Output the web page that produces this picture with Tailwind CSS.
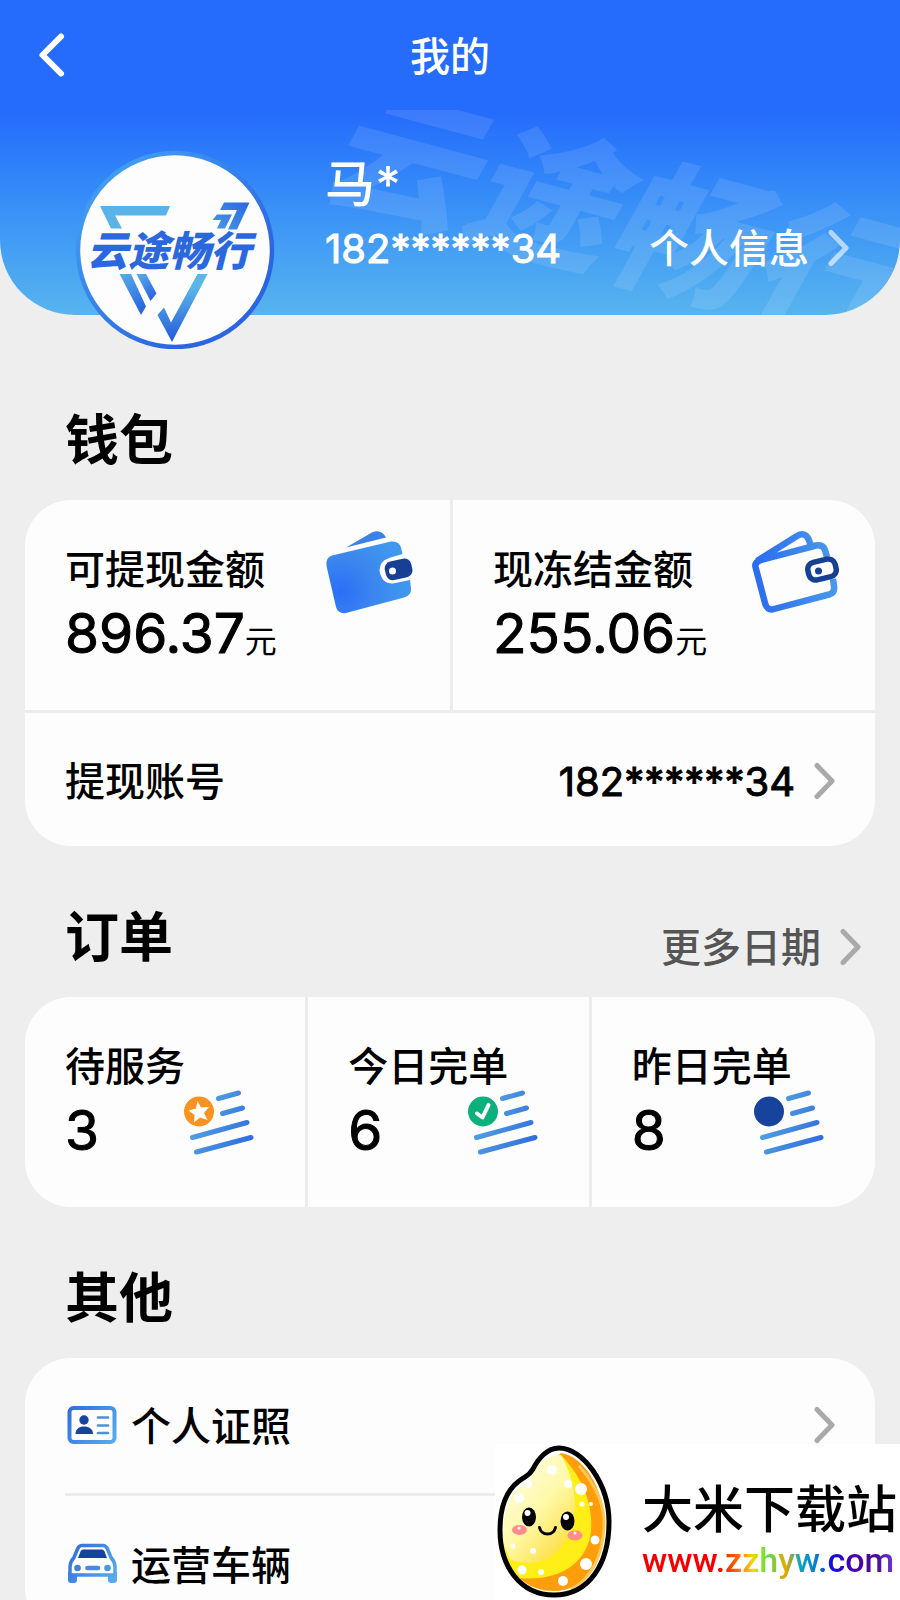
<!DOCTYPE html>
<html lang="zh-CN">
<head>
  <meta charset="UTF-8" />
  <meta name="viewport" content="width=device-width, initial-scale=1.0" />
  <title>我的</title>
  <script src="https://cdn.jsdelivr.net/npm/@tailwindcss/browser@4"></script>
</head>
<body class="h-screen overflow-hidden bg-[#eeeeee] font-['Inter','Noto_Sans_CJK_SC',sans-serif] font-medium text-black">

  <!-- Shared symbols and gradients -->
  <svg class="absolute size-0" aria-hidden="true">
    <defs>
      <linearGradient id="line" gradientUnits="userSpaceOnUse" x1="8" y1="20" x2="68" y2="52">
        <stop offset="0" stop-color="#58a9e0" />
        <stop offset="1" stop-color="#2f6de0" />
      </linearGradient>
      <linearGradient id="icon" gradientUnits="userSpaceOnUse" x1="3" y1="3" x2="52" y2="42">
        <stop offset="0" stop-color="#2f6be0" />
        <stop offset="1" stop-color="#5ab2ec" />
      </linearGradient>
      <symbol id="chevron" viewBox="0 0 24 40">
        <path d="M6 3.5 21 19 6 34.5" fill="none" stroke="currentColor" stroke-width="5" stroke-linecap="round" stroke-linejoin="round" />
      </symbol>
      <symbol id="list" viewBox="0 0 71 67">
        <path d="M35.5 9.5 55.5 4M39.5 24.5 59.5 19M9.5 48.5 64 33.5M13.5 63 68 48.5" fill="none" stroke="url(#line)" stroke-width="5" stroke-linecap="round" />
      </symbol>
    </defs>
  </svg>

  <!-- Header -->
  <header class="relative rounded-b-[75px] bg-linear-to-b from-[#266cfc] from-36% to-[#58b4ee] text-white">
    <div class="absolute inset-x-0 top-[110px] bottom-0 overflow-hidden rounded-b-[75px]" aria-hidden="true">
      <div class="absolute -top-11 left-[329px] origin-left rotate-15 text-[146px] leading-[150px] font-black whitespace-nowrap text-white/10 italic">云途畅行</div>
    </div>

    <nav class="relative grid h-[110px] grid-cols-[1fr_auto_1fr] items-center pl-9">
      <button type="button" aria-label="返回" class="w-8">
        <svg class="h-12 w-8" viewBox="0 0 32 48" fill="none" stroke="currentColor" stroke-width="6" stroke-linecap="round" stroke-linejoin="round">
          <path d="M25 5.500 6.500 24 25 42.500" />
        </svg>
      </button>
      <h1 class="pt-1 pr-9 text-[40px] leading-[56px]">我的</h1>
    </nav>

    <div class="relative flex pr-[51px] pl-[75px]">
      <svg class="mt-[39px] -mb-[34px] size-[200px] shrink-0" viewBox="0 0 200 200" role="img" aria-label="头像">
        <defs>
          <linearGradient id="ring" x1="0" y1="0" x2="1" y2="1">
            <stop offset="0.15" stop-color="#409cf0" />
            <stop offset="0.75" stop-color="#2b66e2" />
          </linearGradient>
          <linearGradient id="strip" x1="0" y1="0" x2="0.6" y2="1">
            <stop offset="0" stop-color="#58b0e8" />
            <stop offset="1" stop-color="#2b66e2" />
          </linearGradient>
          <linearGradient id="arrow" x1="0" y1="1" x2="1" y2="0">
            <stop offset="0" stop-color="#4a9ae8" />
            <stop offset="1" stop-color="#2b66e2" />
          </linearGradient>
          <linearGradient id="tick" x1="0" y1="0" x2="0" y2="1">
            <stop offset="0.2" stop-color="#5ab5e9" />
            <stop offset="1" stop-color="#2459dc" />
          </linearGradient>
        </defs>
        <circle cx="100" cy="101" r="97" fill="#fdfdfd" stroke="url(#ring)" stroke-width="4.500" />
        <path d="M25 57H95L91 66.500H40L47 79.500H36Z" fill="#59b3e8" />
        <path d="M149 53.500H174.500L162 80.500H153L162 61H145ZM142 65.500H157L150 79.500H142L146 71H137.500Z" fill="url(#arrow)" />
        <path d="M44.500 125H56L71 157.500 66 166Z" fill="url(#strip)" />
        <path d="M61.500 125H71L81.500 144.500 75.500 152Z" fill="url(#strip)" />
        <path d="M122.500 125H132.500L97 193 82.500 166 89 158.500 96 173.500Z" fill="url(#tick)" />
        <text x="12" y="117" font-size="41" font-weight="900" font-style="italic" fill="#2c68dd">云途畅行</text>
      </svg>

      <div class="mt-[46px] ml-[50px] flex-1">
        <p class="text-[50px] leading-[56px]">马*</p>
        <div class="mt-2 flex items-center justify-between pt-px text-[40px] leading-[56px]">
          <span class="font-normal [-webkit-text-stroke:1px]">182******34</span>
          <a href="#" class="flex items-center gap-4">个人信息
            <svg class="h-10 w-6 text-white/60"><use href="#chevron" /></svg>
          </a>
        </div>
      </div>
    </div>
  </header>

  <main class="px-[25px] pt-[34px]">
    <!-- Wallet -->
    <section>
      <h2 class="mt-[54px] mb-[21px] pl-10 text-[54px] leading-[76px] font-semibold">钱包</h2>
      <div class="overflow-hidden rounded-[46px] bg-[#fdfdfd]">
        <div class="grid grid-cols-2 border-b-3 border-[#ececec]">
          <div class="flex justify-between pt-[42px] pr-[37px] pb-10 pl-10">
            <div>
              <p class="text-[40px] leading-[56px]">可提现金额</p>
              <p class="text-[55px] leading-[70px] font-normal [-webkit-text-stroke:1px]">896.37<span class="text-[32px] leading-none [-webkit-text-stroke:0]">元</span></p>
            </div>
            <svg class="-mt-[12px] h-[84px] w-[88px] shrink-0" viewBox="0 0 88 84" aria-hidden="true">
              <defs>
                <radialGradient id="wallet" gradientUnits="userSpaceOnUse" cx="16" cy="62" r="66">
                  <stop offset="0" stop-color="#2b6ef8" />
                  <stop offset="0.500" stop-color="#3b86ee" />
                  <stop offset="1" stop-color="#3f98ee" />
                </radialGradient>
              </defs>
              <path d="M21 17.500 47 2.500Q56-1.500 61 7.500Z" fill="#3b82e8" />
              <path d="M7 25.500 66 11.500Q74 10.500 76 17.500L77.500 24 65.500 27.500Q54 31 54.500 41 57 54 68 53.500L85 50 86 58Q87 65 79 67.500L21 83Q13 84 11 77L1.500 36Q0 28 7 25.500Z" fill="url(#wallet)" />
              <rect x="60" y="30" width="27" height="19" rx="7" transform="rotate(-13 73 39)" fill="#173f94" />
              <circle cx="67.500" cy="41" r="3.500" fill="#fff" />
            </svg>
          </div>
          <div class="flex justify-between border-l-3 border-[#ececec] pt-[42px] pr-9 pb-[42px] pl-10">
            <div>
              <p class="text-[40px] leading-[56px]">现冻结金额</p>
              <p class="text-[55px] leading-[70px] font-normal [-webkit-text-stroke:1px]">255.06<span class="text-[32px] leading-none [-webkit-text-stroke:0]">元</span></p>
            </div>
            <svg class="-mt-[12px] h-[84px] w-[88px] shrink-0" viewBox="0 0 88 84" fill="none" stroke-linecap="butt" stroke-linejoin="round" aria-hidden="true">
              <defs>
                <linearGradient id="outline" gradientUnits="userSpaceOnUse" x1="4" y1="50" x2="86" y2="45">
                  <stop offset="0" stop-color="#2b6cf0" />
                  <stop offset="1" stop-color="#4a9aea" />
                </linearGradient>
              </defs>
              <path d="M76 27 74 20Q72 14 65 15.500L10 30Q3.500 32 4.500 37L14 73Q16 81 23 79L78 64.500Q84 63 83 56L82 49M6 31 46 6Q56 0 59.500 15" stroke="url(#outline)" stroke-width="6.500" />
              <rect x="57" y="30.500" width="28" height="18" rx="7" transform="rotate(-13 71 39.500)" fill="#fdfdfd" stroke="#173f94" stroke-width="5.500" />
              <circle cx="67.500" cy="41" r="3.500" fill="#173f94" />
            </svg>
          </div>
        </div>
        <a href="#" class="flex h-[133px] items-center justify-between px-10 pt-1 text-[40px] leading-[56px]">
          <span>提现账号</span>
          <span class="flex items-center gap-4 font-normal"><span class="[-webkit-text-stroke:1px]">182******34</span>
            <svg class="h-10 w-6 text-[#a9a9a9]"><use href="#chevron" /></svg>
          </span>
        </a>
      </div>
    </section>

    <!-- Orders -->
    <section>
      <div class="mt-[54px] mb-[21px] flex items-end justify-between pr-3.5 pl-10">
        <h2 class="text-[54px] leading-[76px] font-semibold">订单</h2>
        <a href="#" class="flex items-center gap-4 text-[40px] leading-[56px] text-[#555555]">更多日期
          <svg class="h-10 w-6 text-[#a9a9a9]"><use href="#chevron" /></svg>
        </a>
      </div>
      <div class="grid grid-cols-3 divide-x-3 divide-[#ececec] overflow-hidden rounded-[46px] bg-[#fdfdfd]">
        <div class="pt-[42px] pb-[42px] pl-10">
          <p class="text-[40px] leading-[56px]">待服务</p>
          <div class="flex items-start justify-between pr-[51px] text-[55px] leading-[70px] font-normal [-webkit-text-stroke:1px]">3
            <svg class="-mt-[6px] h-[67px] w-[71px]" viewBox="0 0 71 67" aria-hidden="true">
              <use href="#list" />
              <circle cx="16" cy="22.500" r="15" fill="#f7931e" />
              <path d="M14.500 12 18 18.500 26 18 21 24 24.500 31 17 28.500 11 33.500 11.500 26 5.500 21.500 13 19.500Z" fill="#fff" />
            </svg>
          </div>
        </div>
        <div class="pt-[42px] pb-[42px] pl-10">
          <p class="text-[40px] leading-[56px]">今日完单</p>
          <div class="flex items-start justify-between pr-[51px] text-[55px] leading-[70px] font-normal [-webkit-text-stroke:1px]">6
            <svg class="-mt-[6px] h-[67px] w-[71px]" viewBox="0 0 71 67" aria-hidden="true">
              <use href="#list" />
              <circle cx="16" cy="22.500" r="15" fill="#0bb07b" />
              <path d="M10 24.500 15.500 28.500 21.500 16" fill="none" stroke="#fff" stroke-width="4" stroke-linecap="round" stroke-linejoin="round" />
            </svg>
          </div>
        </div>
        <div class="pt-[42px] pb-[42px] pl-10">
          <p class="text-[40px] leading-[56px]">昨日完单</p>
          <div class="flex items-start justify-between pr-[51px] text-[55px] leading-[70px] font-normal [-webkit-text-stroke:1px]">8
            <svg class="-mt-[6px] h-[67px] w-[71px]" viewBox="0 0 71 67" aria-hidden="true">
              <use href="#list" />
              <circle cx="16" cy="22.500" r="15" fill="#16439c" />
            </svg>
          </div>
        </div>
      </div>
    </section>

    <!-- Other -->
    <section>
      <h2 class="mt-[54px] mb-[21px] pl-10 text-[54px] leading-[76px] font-semibold">其他</h2>
      <div class="rounded-[46px] bg-[#fdfdfd] px-10 text-[40px] leading-[56px]">
        <a href="#" class="flex h-[138px] items-center gap-3.5 border-b-3 border-[#ececec]">
          <svg class="h-11 w-[52px]" viewBox="0 0 52 44" fill="none" aria-hidden="true">
            <rect x="4.500" y="4" width="45" height="34" rx="4" stroke="url(#icon)" stroke-width="4" />
            <circle cx="19" cy="16" r="4.700" fill="#16439c" />
            <path d="M10.500 30C10.500 25 14 22.500 19 22.500S28 25 28 30Z" fill="#16439c" />
            <path d="M33 13.500H43M33 21.500H43M33 29H43" stroke="#4a92dc" stroke-width="2.700" stroke-linecap="round" />
          </svg>
          <span class="flex-1 pt-0.5">个人证照</span>
          <svg class="h-10 w-6 text-[#a9a9a9]"><use href="#chevron" /></svg>
        </a>
        <a href="#" class="flex h-[138px] items-center gap-3.5">
          <svg class="h-11 w-[52px]" viewBox="0 0 52 44" fill="none" aria-hidden="true">
            <path d="M3 29H12V37Q12 40 9 40H6Q3 40 3 37ZM43 29H52V37Q52 40 49 40H46Q43 40 43 37Z" fill="url(#icon)" />
            <path d="M17 2.500H38Q41 2.500 42.500 6L46 14.500Q50 19 50 24V32H5V24Q5 19 9 14.500L12.500 6Q14 2.500 17 2.500Z" fill="#fdfdfd" stroke="url(#icon)" stroke-width="3.500" />
            <path d="M18 6.500H37Q38.500 6.500 39.500 8.500L42 15H13L15.500 8.500Q16.500 6.500 18 6.500Z" fill="#16439c" />
            <circle cx="12.500" cy="25" r="3.300" fill="#3f82dc" />
            <circle cx="42.500" cy="25" r="3.300" fill="#4a98e0" />
            <path d="M22.500 25H33" stroke="#458cdc" stroke-width="4.700" stroke-linecap="round" />
          </svg>
          <span class="flex-1 pt-0.5">运营车辆</span>
          <svg class="h-10 w-6 text-[#a9a9a9]"><use href="#chevron" /></svg>
        </a>
      </div>
    </section>
  </main>

  <!-- Site badge over the page corner -->
  <aside class="fixed right-0 bottom-0 flex h-[156px] w-[405px] bg-white font-['Noto_Sans_CJK_SC',sans-serif]">
    <svg class="h-[156px] w-[118px] shrink-0" viewBox="0 0 118 156" aria-hidden="true">
      <defs>
        <linearGradient id="rice" x1="0.200" y1="0.100" x2="0.800" y2="0.900">
          <stop offset="0" stop-color="#fffde0" />
          <stop offset="0.500" stop-color="#fff9a8" />
          <stop offset="1" stop-color="#ffe04a" />
        </linearGradient>
        <clipPath id="grain">
          <path d="M64 4C88 4 114 40 114 78C114 120 94 151 59 151C25 151 5 122 5 86C5 62 12 46 24 37C32 31 34 32 38 25C43 15 52 4 64 4Z" />
        </clipPath>
      </defs>
      <g clip-path="url(#grain)">
        <path d="M0 0H118V156H0Z" fill="#fff" />
        <path d="M66 9C88 12 109 44 109 78C109 118 90 147 59 147C38 147 22 136 14 120L34 40Z" fill="#ff9d0a" />
        <path d="M66 11C88 34 98 60 96 88C92 118 66 138 24 134C10 120 8 100 9 84C10 58 20 46 30 40C42 30 40 14 66 11Z" fill="#ffee18" />
        <path d="M66 11C82 40 84 70 72 94C62 114 42 124 16 116C8 104 8 92 9 84C10 58 20 46 30 40C42 30 40 14 66 11Z" fill="url(#rice)" />
        <path d="M84 22Q111 52 109 84 106 128 76 146" fill="none" stroke="#ffc65a" stroke-width="3" />
      </g>
      <g fill="#fff">
        <circle cx="86" cy="45" r="6" />
        <circle cx="73" cy="40" r="4" />
        <circle cx="57" cy="26" r="5" />
        <circle cx="24" cy="54" r="5" />
        <circle cx="33" cy="40" r="4" />
        <circle cx="87" cy="60" r="2.500" />
        <circle cx="96" cy="60" r="2" />
        <circle cx="100" cy="96" r="4.500" />
        <circle cx="91" cy="120" r="6" />
        <circle cx="68" cy="137" r="5" />
        <circle cx="27" cy="126" r="4.500" />
        <circle cx="46" cy="128" r="3" />
        <circle cx="38" cy="107" r="3" />
        <circle cx="18" cy="102" r="2.500" />
      </g>
      <path d="M64 4C88 4 114 40 114 78C114 120 94 151 59 151C25 151 5 122 5 86C5 62 12 46 24 37C32 31 34 32 38 25C43 15 52 4 64 4Z" fill="none" stroke="#000" stroke-width="5" />
      <ellipse cx="34" cy="73" rx="7" ry="9.500" />
      <ellipse cx="72.500" cy="77" rx="7" ry="9.500" />
      <circle cx="32.500" cy="69" r="3" fill="#fff" />
      <circle cx="71" cy="73" r="3" fill="#fff" />
      <ellipse cx="24.500" cy="86" rx="7.500" ry="5" fill="#ff8d8d" />
      <ellipse cx="80" cy="91.500" rx="7.500" ry="5" fill="#ff8d8d" />
      <circle cx="24" cy="84" r="1.500" fill="#fff" />
      <circle cx="80" cy="89" r="1.500" fill="#fff" />
      <path d="M44.500 83.500Q46 90 52.500 90 59 90 60.500 83.500" fill="none" stroke="#000" stroke-width="3" stroke-linecap="round" />
    </svg>
    <div class="ml-[29px] pt-8 whitespace-nowrap">
      <p class="text-[51px] leading-[60px]">大米下载站</p>
      <p class="w-fit bg-[linear-gradient(90deg,#f50000_0%,#f50000_30%,#ff6a00_38%,#f2d80a_44%,#4fe04a_50%,#e8a800_57%,#00a6c8_63%,#0a6fd0_71%,#1010d8_75%,#4a00a8_84%,#4b0a9c_93%,#6a3ad0_100%)] bg-clip-text font-['Roboto',sans-serif] text-[34px] leading-[48px] text-transparent">www.zzhyw.com</p>
    </div>
  </aside>
</body>
</html>
